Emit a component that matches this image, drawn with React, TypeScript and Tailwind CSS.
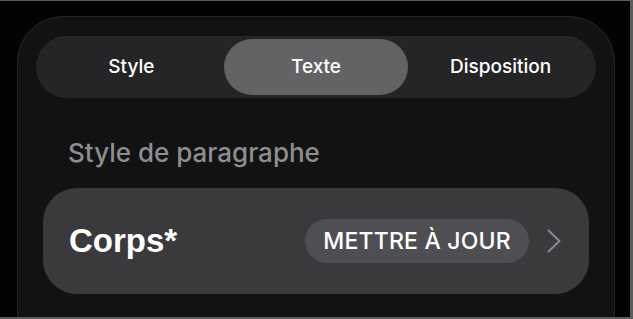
const tabs = ["Style", "Texte", "Disposition"];

export default function App() {
  const active = "Texte";

  return (
    <div className="h-[319px] w-[633px] overflow-hidden border-t border-r-[3px] border-b-2 border-[#5c5c5e] bg-[#030303] font-['Inter',sans-serif]">
      <div className="mt-[15px] ml-[17px] h-[320px] w-[598px] rounded-t-[46px] border border-[#262628] bg-[#121212] px-[18px] pt-[19px]">
        {/* segmented control */}
        <div className="grid h-[62px] grid-cols-3 rounded-full bg-[#252527] p-[3px]">
          {tabs.map((t) => (
            <div
              key={t}
              className={
                t === active
                  ? "flex items-center justify-center rounded-full bg-[#636366] text-[19px] font-medium text-white"
                  : "flex items-center justify-center text-[19px] font-medium text-white"
              }
            >
              {t}
            </div>
          ))}
        </div>

        <h2 className="mt-[38px] pl-[32px] text-[26px] leading-[34px] font-medium text-[#8d8d92]">
          Style de paragraphe
        </h2>

        {/* paragraph style row */}
        <div className="mx-[7px] mt-[18px] flex h-[106px] items-center rounded-[34px] bg-[#3a3a3c] pr-[28px] pl-[26px]">
          <span className="font-['Liberation_Sans',sans-serif] text-[33px] font-bold text-white">Corps*</span>
          <div className="ml-auto flex h-[44px] w-[224px] items-center justify-center rounded-full bg-[#4f4f53] text-[23px] font-medium tracking-[0.2px] text-white">
            METTRE À JOUR
          </div>
          <svg className="ml-[18px]" width="14" height="24" viewBox="0 0 14 24" fill="none">
            <polyline
              points="1.5,1.5 12.5,12 1.5,22.5"
              stroke="#8a8a8e"
              strokeWidth="2"
              strokeLinecap="round"
              strokeLinejoin="round"
            />
          </svg>
        </div>
      </div>
    </div>
  );
}
